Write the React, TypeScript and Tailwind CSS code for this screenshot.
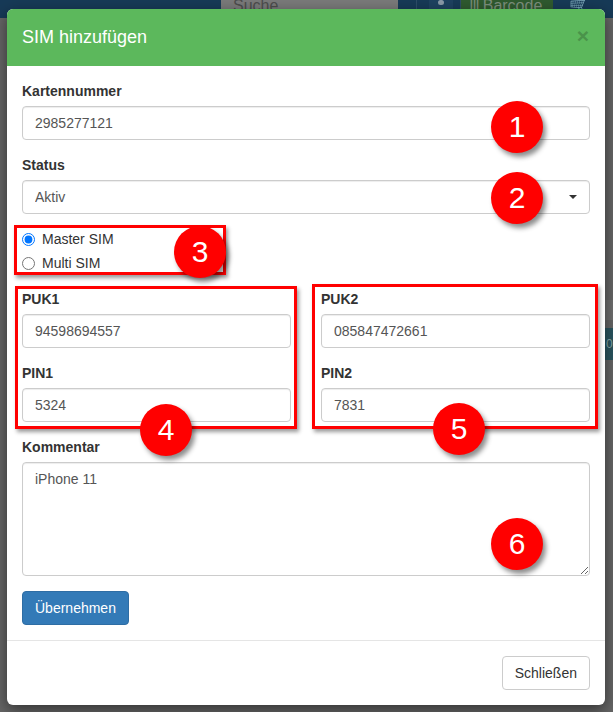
import React from 'react';

const font = { fontFamily: '"Liberation Sans", Arial, sans-serif' };

/** Red numbered marker drawn over the form */
const Marker = ({ n, className }: { n: number; className: string }) => (
    <div
        className={`absolute w-[52px] h-[52px] rounded-full bg-[#ff0000] text-white text-[30px] leading-none flex items-center justify-center shadow-[3px_4px_5px_rgba(0,0,0,0.45)] ${className}`}
    >
        {n}
    </div>
);

const Label = ({ children }: { children: React.ReactNode }) => (
    <label className="block text-[14px] leading-[20px] font-bold text-[#333] mb-[5px]">{children}</label>
);

const Input = ({ value }: { value: string }) => (
    <input
        readOnly
        value={value}
        className="block w-full h-[34px] px-3 text-[14px] text-[#555] bg-white border border-[#ccc] rounded-[4px] shadow-[inset_0_1px_1px_rgba(0,0,0,0.075)] outline-none"
        style={font}
    />
);

export default function App() {
    return (
        <div className="relative w-[613px] h-[712px] overflow-hidden bg-[#666]" style={font}>
            {/* page behind the dimmed backdrop */}
            <div className="h-[18px] bg-[#173a57] flex items-start">
                <div className="ml-[221px] w-[181px] h-[40px] -mt-[8px] bg-[#7a7a7a] text-[#4d4d4d] text-[16px] pl-3 pt-[2px]">Suche...</div>
                <div className="ml-[18px] w-px h-[18px] bg-[#2d4d68]" />
                <div className="ml-[12px] w-[25px] h-[18px] bg-[#1e4260] flex justify-center">
                    <div className="w-[6px] h-[5px] bg-[#8a9aa8] rounded-sm" />
                </div>
                <div className="ml-[7px] w-px h-[18px] bg-[#2d4d68]" />
                <div className="w-[94px] h-[18px] bg-[#2f5a2f] text-[#7d8f7d] text-[16px] leading-[12px] pl-[8px] flex items-start gap-[4px]">
                    <span className="tracking-[-1px]">|||</span>
                    <span>Barcode</span>
                </div>
                <div className="ml-[16px] text-[#8a9aa8] text-[16px] leading-[12px]">🛒 Da</div>
            </div>
            <div className="absolute right-0 top-[300px] w-[8px] h-[20px] bg-[#707070]" />
            <div className="absolute right-0 top-[328px] w-[8px] h-[32px] bg-[#2a5560] text-[#8aa] text-[12px] leading-[32px] pl-[1px]">0</div>

            {/* modal */}
            <div className="absolute left-[7px] top-[9px] w-[598px] bg-white rounded-[6px] shadow-[0_5px_15px_rgba(0,0,0,0.5)]">
                <div className="bg-[#5cb85c] rounded-t-[6px] h-[57px] px-[15px] flex items-center justify-between">
                    <h4 className="text-[18px] text-white">SIM hinzufügen</h4>
                    <span className="text-[21px] font-bold text-[#4a934a] leading-none mr-[1px] -mt-[4px]">×</span>
                </div>

                <div className="relative p-[15px]">
                    <div className="mb-[15px]">
                        <Label>Kartennummer</Label>
                        <Input value="2985277121" />
                    </div>
                    <div>
                        <Label>Status</Label>
                        <div className="relative">
                            <Input value="Aktiv" />
                            <span className="absolute right-[13px] top-[15px] w-0 h-0 border-l-[4px] border-r-[4px] border-t-[4px] border-l-transparent border-r-transparent border-t-[#333]" />
                        </div>
                    </div>
                    <div className="mt-[13px] mb-[14px] text-[14px] text-[#333]">
                        <label className="flex items-center h-[24px] gap-[7px]">
                            <input type="radio" name="sim" defaultChecked className="w-[13px] h-[13px] m-0" />
                            Master SIM
                        </label>
                        <label className="flex items-center h-[24px] gap-[7px]">
                            <input type="radio" name="sim" className="w-[13px] h-[13px] m-0" />
                            Multi SIM
                        </label>
                    </div>
                    <div className="grid grid-cols-2 gap-[30px]">
                        <div>
                            <div className="mb-[15px]">
                                <Label>PUK1</Label>
                                <Input value="94598694557" />
                            </div>
                            <div className="mb-[15px]">
                                <Label>PIN1</Label>
                                <Input value="5324" />
                            </div>
                        </div>
                        <div>
                            <div className="mb-[15px]">
                                <Label>PUK2</Label>
                                <Input value="085847472661" />
                            </div>
                            <div className="mb-[15px]">
                                <Label>PIN2</Label>
                                <Input value="7831" />
                            </div>
                        </div>
                    </div>
                    <div className="mb-[15px]">
                        <Label>Kommentar</Label>
                        <textarea
                            readOnly
                            rows={5}
                            value="iPhone 11"
                            className="block w-full h-[114px] px-3 py-[6px] text-[14px] leading-[20px] text-[#555] border border-[#ccc] rounded-[4px] shadow-[inset_0_1px_1px_rgba(0,0,0,0.075)] outline-none"
                            style={font}
                        />
                    </div>
                    <button className="h-[34px] px-3 text-[14px] text-white bg-[#337ab7] border border-[#2e6da4] rounded-[4px]">
                        Übernehmen
                    </button>

                    {/* annotation boxes */}
                    <div className="absolute left-[7px] top-[159px] w-[212px] h-[50px] border-[3px] border-[#ff0000] shadow-[2px_3px_4px_rgba(0,0,0,0.4)]" />
                    <div className="absolute left-[8px] top-[220px] w-[282px] h-[143px] border-[3px] border-[#ff0000] shadow-[2px_3px_4px_rgba(0,0,0,0.4)]" />
                    <div className="absolute left-[305px] top-[218px] w-[286px] h-[145px] border-[3px] border-[#ff0000] shadow-[2px_3px_4px_rgba(0,0,0,0.4)]" />

                    <Marker n={1} className="left-[484px] top-[35px]" />
                    <Marker n={2} className="left-[484px] top-[106px]" />
                    <Marker n={3} className="left-[167px] top-[160px]" />
                    <Marker n={4} className="left-[133px] top-[338px]" />
                    <Marker n={5} className="left-[426px] top-[337px]" />
                    <Marker n={6} className="left-[484px] top-[452px]" />
                </div>

                <div className="border-t border-[#e5e5e5] p-[15px] flex justify-end">
                    <button className="h-[34px] px-3 text-[14px] text-[#333] bg-white border border-[#ccc] rounded-[4px]">
                        Schließen
                    </button>
                </div>
            </div>
        </div>
    );
}
